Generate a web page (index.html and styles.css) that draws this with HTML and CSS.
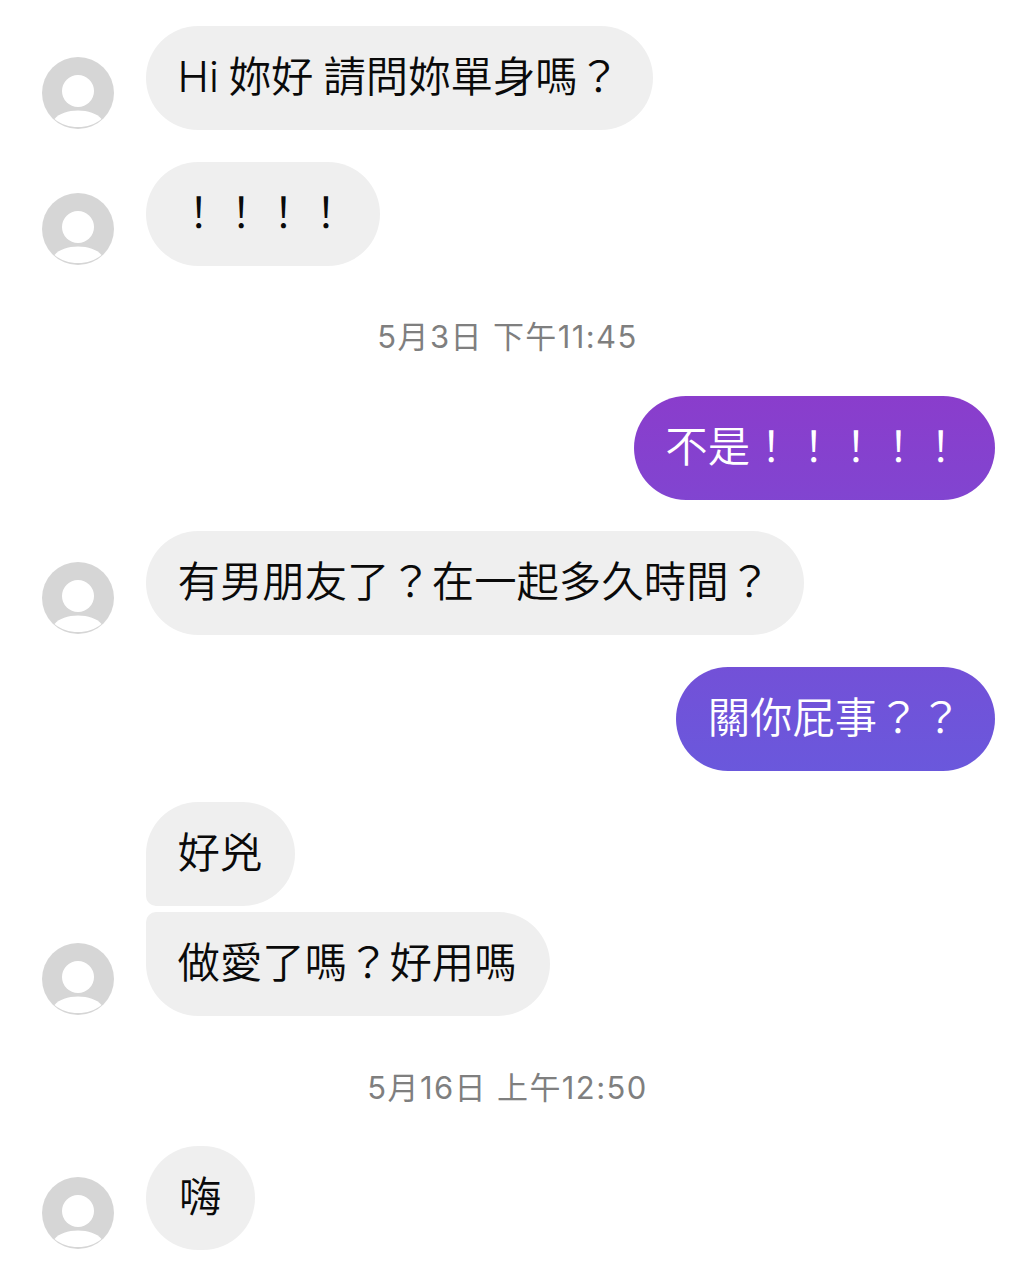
FILE: index.html
```html
<!DOCTYPE html>
<html lang="zh-Hant">
<head>
<meta charset="utf-8">
<title>訊息</title>
<link rel="stylesheet" href="styles.css">
</head>
<body>
<svg class="defs" width="0" height="0" aria-hidden="true">
  <symbol id="avatar" viewBox="0 0 72 72">
    <circle cx="36" cy="36" r="36" fill="#d6d6d6"/>
    <circle cx="36" cy="34" r="16" fill="#fff"/>
    <path d="M12.500 62C17 56.500 26 53.500 36 53.500S55 56.500 59.500 62C53 67.500 45 70 36 70S19 67.500 12.500 62Z" fill="#fff"/>
  </symbol>
</svg>
<main class="thread">
  <div class="row">
    <svg class="avatar"><use href="#avatar"/></svg>
    <p class="bubble in tight">Hi 妳好 請問妳單身嗎？</p>
  </div>
  <div class="row">
    <svg class="avatar"><use href="#avatar"/></svg>
    <p class="bubble in">！！！！</p>
  </div>
  <p class="time">5月3日 下午11:45</p>
  <div class="row out">
    <p class="bubble sent">不是！！！！！</p>
  </div>
  <div class="row">
    <svg class="avatar"><use href="#avatar"/></svg>
    <p class="bubble in">有男朋友了？在一起多久時間？</p>
  </div>
  <div class="row out">
    <p class="bubble sent">關你屁事？？</p>
  </div>
  <div class="row">
    <svg class="avatar"><use href="#avatar"/></svg>
    <div class="group">
      <p class="bubble in first">好兇</p>
      <p class="bubble in last">做愛了嗎？好用嗎</p>
    </div>
  </div>
  <p class="time">5月16日 上午12:50</p>
  <div class="row">
    <svg class="avatar"><use href="#avatar"/></svg>
    <p class="bubble in single">嗨</p>
  </div>
</main>
</body>
</html>
```
FILE: styles.css
```css
* { box-sizing: border-box; }
html, body { margin: 0; background: #fff; }
body {
  font-family: "Inter", "Noto Sans CJK TC", sans-serif;
  color: #0a0a0a;
}
.defs { position: absolute; }
.thread {
  display: flex;
  flex-direction: column;
  gap: 31.5px;
  padding: 26px 21px 0 42px;
}
.row {
  display: flex;
  align-items: flex-end;
  gap: 32px;
}
.row.out { justify-content: flex-end; }
.avatar {
  width: 72px;
  height: 72px;
  flex: none;
  margin-bottom: 0.75px;
}
.group {
  display: flex;
  flex-direction: column;
  align-items: flex-start;
  gap: 6px;
}
.bubble {
  margin: 0;
  height: 104px;
  padding: 0 33px 0 31.5px;
  border-radius: 52px;
  font-size: 42.4px;
  font-weight: 350;
  line-height: 102px;
  white-space: nowrap;
}
.tight { word-spacing: -2px; }
.single { width: 109px; padding-left: 33px; }
.in { background: #efefef; }
.in.first { border-bottom-left-radius: 10px; }
.in.last { border-top-left-radius: 10px; }
.sent {
  color: #fff;
  background: linear-gradient(180deg, #8a3dcc 396px, #6a58dc 771px) fixed;
}
.time {
  margin: 0;
  height: 67px;
  padding: 6px 22px 0 0;
  line-height: 67px;
  text-align: center;
  font-size: 31px;
  letter-spacing: 1.4px;
  font-weight: 400;
  color: #7f7f7f;
}
```
